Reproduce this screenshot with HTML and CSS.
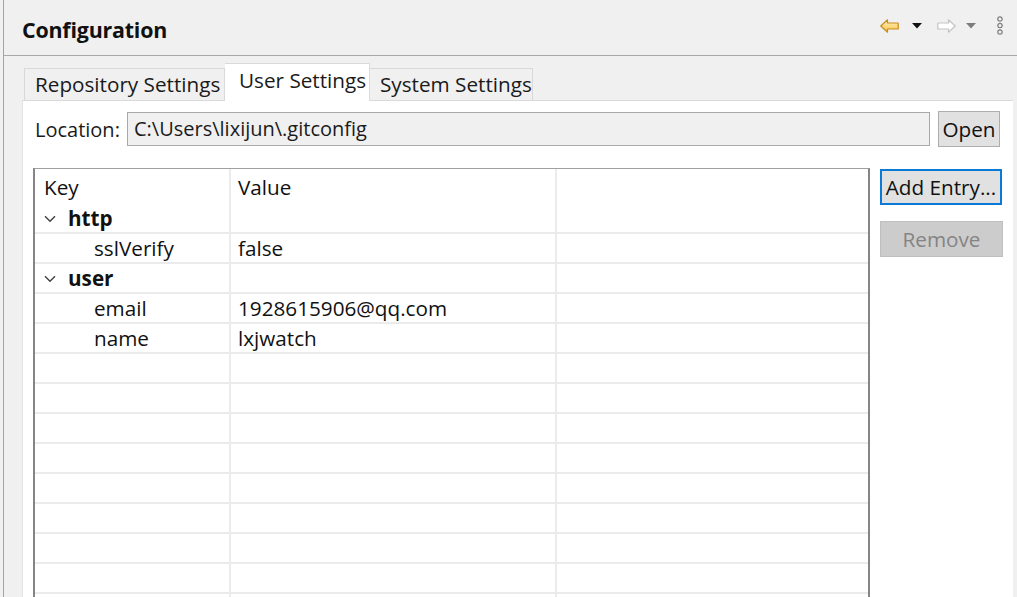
FILE: index.html
```html
<!DOCTYPE html>
<html>
<head>
<meta charset="utf-8">
<link rel="stylesheet" href="styles.css">
</head>
<body>
<div class="view">
  <header class="titlebar">
    <h1 class="title">Configuration</h1>
    <div class="toolbar">
      <svg class="ico arrow" width="19" height="14" viewBox="0 0 19 14">
        <defs>
          <linearGradient id="g1" x1="0" y1="0" x2="0" y2="1">
            <stop offset="0" stop-color="#fff2bf"/>
            <stop offset="1" stop-color="#f6c449"/>
          </linearGradient>
        </defs>
        <path d="M0.8 7 L7.5 0.8 L7.5 4 L18.2 4 L18.2 10 L7.5 10 L7.5 13.2 Z" fill="url(#g1)" stroke="#c98b1c" stroke-width="1.2" stroke-linejoin="round"/>
      </svg>
      <svg class="ico tri" width="10" height="6" viewBox="0 0 10 6"><path d="M0 0 H10 L5 5.5 Z" fill="#111"/></svg>
      <svg class="ico arrow fwd" width="19" height="14" viewBox="0 0 19 14">
        <path d="M18.2 7 L11.5 0.8 L11.5 4 L0.8 4 L0.8 10 L11.5 10 L11.5 13.2 Z" fill="#fff" stroke="#c4c4c4" stroke-width="1.2" stroke-linejoin="round"/>
      </svg>
      <svg class="ico tri tri2" width="10" height="6" viewBox="0 0 10 6"><path d="M0 0 H10 L5 5.5 Z" fill="#7c7c7c"/></svg>
      <svg class="ico dots" width="6" height="19" viewBox="0 0 6 19">
        <circle cx="3" cy="3" r="2.2" fill="none" stroke="#7d7d7d" stroke-width="1.2"/>
        <circle cx="3" cy="9.5" r="2.2" fill="none" stroke="#7d7d7d" stroke-width="1.2"/>
        <circle cx="3" cy="16" r="2.2" fill="none" stroke="#7d7d7d" stroke-width="1.2"/>
      </svg>
    </div>
  </header>
  <div class="content">
    <div class="tabs">
      <div class="tab tab-repo">Repository Settings</div>
      <div class="tab tab-user active">User Settings</div>
      <div class="tab tab-sys">System Settings</div>
    </div>
    <div class="panel">
      <div class="location">
        <span class="loc-label">Location:</span>
        <div class="loc-field">C:\Users\lixijun\.gitconfig</div>
        <button class="btn open">Open</button>
      </div>
      <div class="main">
        <div class="tree">
          <div class="row head">
            <div class="cell key">Key</div>
            <div class="cell val">Value</div>
            <div class="cell extra"></div>
          </div>
          <div class="row">
            <div class="cell key section"><svg class="chev" width="12" height="8" viewBox="0 0 12 8"><path d="M1 1.2 L6 6.2 L11 1.2" fill="none" stroke="#444" stroke-width="1.5"/></svg><b>http</b></div>
            <div class="cell val"></div>
            <div class="cell extra"></div>
          </div>
          <div class="row">
            <div class="cell key child">sslVerify</div>
            <div class="cell val">false</div>
            <div class="cell extra"></div>
          </div>
          <div class="row">
            <div class="cell key section"><svg class="chev" width="12" height="8" viewBox="0 0 12 8"><path d="M1 1.2 L6 6.2 L11 1.2" fill="none" stroke="#444" stroke-width="1.5"/></svg><b>user</b></div>
            <div class="cell val"></div>
            <div class="cell extra"></div>
          </div>
          <div class="row">
            <div class="cell key child">email</div>
            <div class="cell val">1928615906@qq.com</div>
            <div class="cell extra"></div>
          </div>
          <div class="row">
            <div class="cell key child">name</div>
            <div class="cell val">lxjwatch</div>
            <div class="cell extra"></div>
          </div>
          <div class="row"><div class="cell key"></div><div class="cell val"></div><div class="cell extra"></div></div>
          <div class="row"><div class="cell key"></div><div class="cell val"></div><div class="cell extra"></div></div>
          <div class="row"><div class="cell key"></div><div class="cell val"></div><div class="cell extra"></div></div>
          <div class="row"><div class="cell key"></div><div class="cell val"></div><div class="cell extra"></div></div>
          <div class="row"><div class="cell key"></div><div class="cell val"></div><div class="cell extra"></div></div>
          <div class="row"><div class="cell key"></div><div class="cell val"></div><div class="cell extra"></div></div>
          <div class="row"><div class="cell key"></div><div class="cell val"></div><div class="cell extra"></div></div>
          <div class="row"><div class="cell key"></div><div class="cell val"></div><div class="cell extra"></div></div>
          <div class="row"><div class="cell key"></div><div class="cell val"></div><div class="cell extra"></div></div>
        </div>
        <div class="side">
          <button class="btn add">Add Entry...</button>
          <button class="btn remove" disabled>Remove</button>
        </div>
      </div>
    </div>
  </div>
</div>
</body>
</html>
```

FILE: styles.css
```css
* { box-sizing: border-box; }

html, body {
  margin: 0;
  padding: 0;
  height: 597px;
  overflow: hidden;
}

body {
  background: #f0f0f0;
  font-family: "Open Sans", "Noto Sans", "Liberation Sans", sans-serif;
  font-size: 20.7px;
  color: #111;
}

.view {
  margin-left: 3px;
  border-left: 1px solid #a3a3a3;
  height: 597px;
  display: flex;
  flex-direction: column;
}

.titlebar {
  height: 56px;
  border-bottom: 1px solid #a8a8a8;
  display: flex;
  align-items: flex-start;
  padding: 0 14px 0 18px;
}

.title {
  margin: 17px 0 0 0;
  font-size: 21.4px;
  font-weight: 700;
  line-height: 26px;
  color: #111;
  letter-spacing: -0.2px;
}

.toolbar {
  margin-left: auto;
  display: flex;
  align-items: center;
  padding-top: 16px;
  height: 35px;
}

.ico { display: block; }
.arrow { margin-right: 13px; }
.tri { margin-right: 15px; }
.fwd { margin-right: 10px; }
.tri2 { margin-right: 21px; }

.content {
  flex: 1;
  display: flex;
  flex-direction: column;
  padding: 0 4px 0 18px;
  min-height: 0;
}

.tabs {
  display: flex;
  align-items: flex-end;
  height: 44px;
  padding-left: 2px;
}

.tab {
  height: 32px;
  line-height: 30px;
  border: 1px solid #d9d9d9;
  border-bottom: none;
  background: #f0f0f0;
  font-size: 20.7px;
  padding: 0 0 0 10px;
  white-space: nowrap;
  color: #1a1a1a;
}

.tab-repo { width: 201px; }
.tab-sys { width: 163px; border-left: none; }

.tab.active {
  width: 145px;
  height: 38px;
  line-height: 32px;
  background: #fff;
  margin-bottom: -1px;
  position: relative;
  z-index: 1;
  padding-left: 14px;
  border-left: none;
  border-right: 1px solid #dcdcdc;
}

.panel {
  flex: 1;
  background: #fff;
  border-top: 1px solid #d9d9d9;
  border-left: 1px solid #e3e3e3;
  padding: 10px 10px 0 10px;
  display: flex;
  flex-direction: column;
  min-height: 0;
}

.location {
  display: flex;
  align-items: center;
  height: 36px;
}

.loc-label {
  margin-left: 2px;
  width: 92px;
  white-space: nowrap;
  font-size: 20px;
  color: #1a1a1a;
}

.loc-field {
  flex: 1;
  height: 34px;
  border: 1px solid #a9a9a9;
  background: #f0f0f0;
  line-height: 31px;
  padding-left: 6px;
  font-size: 20px;
  color: #1a1a1a;
}

.btn {
  font-family: inherit;
  font-size: 20.7px;
  color: #111;
  background: #e1e1e1;
  border: 1px solid #adadad;
  padding: 0;
  cursor: default;
}

.open {
  width: 62px;
  height: 36px;
  margin-left: 8px;
  margin-right: 3px;
}

.main {
  margin-top: 21px;
  flex: 1;
  display: flex;
  min-height: 0;
}

.tree {
  width: 838px;
  border-top: 1px solid #a0a0a0;
  border-left: 2px solid #858585;
  border-right: 2px solid #858585;
  overflow: hidden;
}

.row {
  display: flex;
  height: 30px;
  border-bottom: 2px solid #ebebeb;
}

.row.head {
  height: 33px;
  border-bottom: none;
}

.cell {
  height: 100%;
  display: flex;
  align-items: center;
  white-space: nowrap;
  color: #111;
  font-size: 20.7px;
}

.key {
  width: 196px;
  border-right: 2px solid #ebebeb;
  padding-left: 9px;
}

.val {
  width: 326px;
  border-right: 2px solid #ebebeb;
  padding-left: 7px;
}

.extra { flex: 1; }

.head .cell { padding-top: 2px; }

.row:nth-child(2) { height: 32px; }
.row:nth-child(2) .cell { padding-top: 2px; }

.section { padding-left: 9px; }
.section b { font-weight: 700; }

.chev {
  display: block;
  margin-right: 12px;
  margin-top: 1px;
}

.row:nth-child(2) .section { padding-left: 9px; }

.child { padding-left: 59px; }

.side {
  margin-left: 10px;
  display: flex;
  flex-direction: column;
  align-items: flex-start;
}

.add {
  width: 122px;
  height: 36px;
  margin-top: 1px;
  border: 2px solid #0a7ad6;
}

.remove {
  width: 123px;
  height: 36px;
  margin-top: 16px;
  background: #cccccc;
  border: 1px solid #bfbfbf;
  color: #848484;
}
```
